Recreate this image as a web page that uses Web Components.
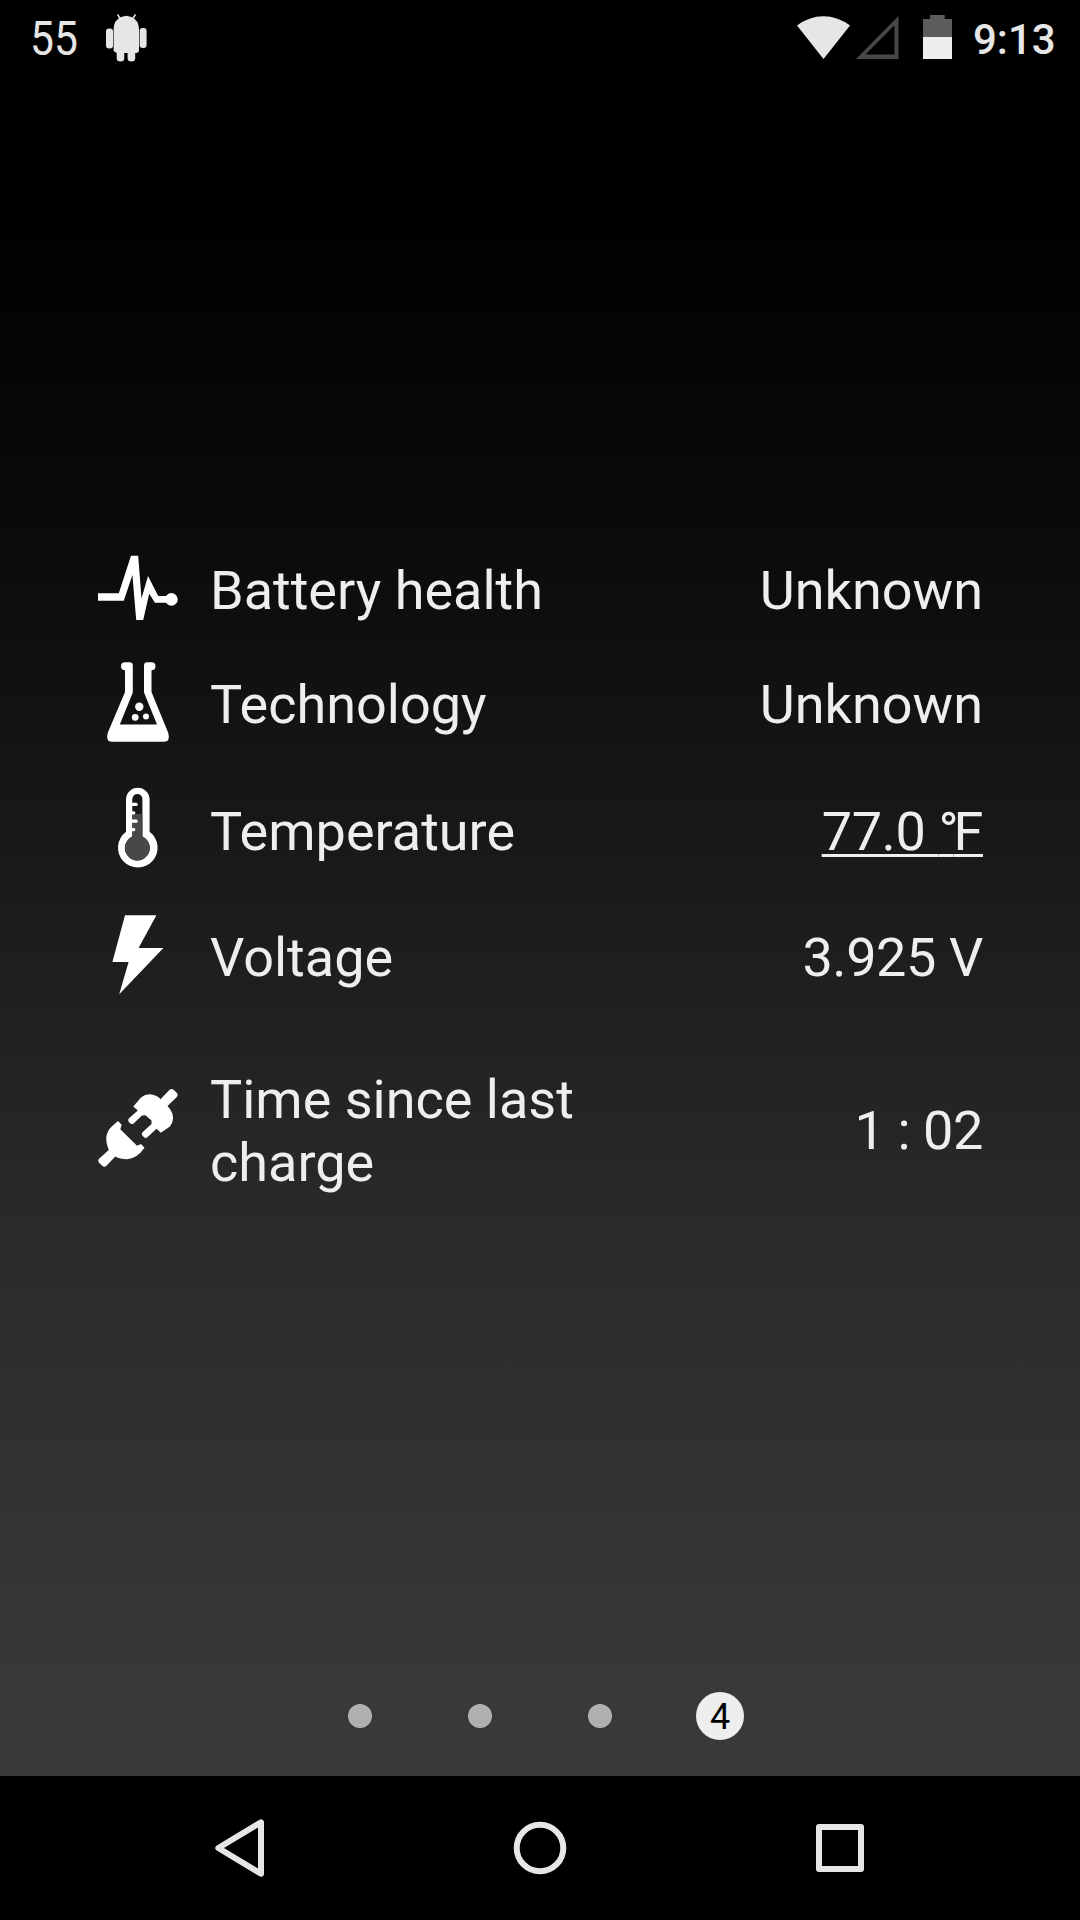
<!DOCTYPE html>
<html lang="en">
<head>
<meta charset="utf-8">
<title>Battery</title>
<style>
    body{
        margin: 0;
        background: #000;
        color: #eee;
        font-family: Roboto, sans-serif;
    }
</style>
</head>
<body>
<battery-app></battery-app>

<script>
const icons = {
    health: `<svg viewBox="18 8 80 80" fill="#fff">
        <path d="M18 53.2H38.8L51 15.8H58.2L61.5 58.5L68 36L78.2 56H87V62.8H75L69.2 53.8L63.2 80H56.2L52.4 35L43.8 60.8H18Z"/>
        <circle cx="91.4" cy="59.4" r="6.3"/>
    </svg>`,
    flask: `<svg viewBox="18 12 80 80" fill="#fff">
        <path fill-rule="evenodd" d="M45 12.2H49.5Q52.8 12.2 52.8 15.5V42.5L39.8 74.6H77L64 42.5V15.5Q64 12.2 67.3 12.2H71.5A4 4 0 0 1 71.5 20.2V42L88.3 83Q90.5 91.7 84 91.7H32Q25.5 91.7 27.7 83L45 42V20.2A4 4 0 0 1 45 12.2Z"/>
        <circle cx="59.3" cy="56.7" r="4.2"/>
        <circle cx="55.2" cy="67.3" r="3.4"/>
        <circle cx="66" cy="66.5" r="3"/>
    </svg>`,
    thermometer: `<svg viewBox="18 14 80 80" fill="#fff">
        <path fill-rule="evenodd" d="M46 24.5A11.8 11.8 0 0 1 69.6 24.5V56.8A19.8 19.8 0 1 1 46 56.8ZM52.3 24V61.5A12.5 12.5 0 1 0 62.4 61.5V24A5 5 0 0 0 52.3 24Z"/>
        <path fill="#484848" d="M52.3 39H62.4V61.5A12.5 12.5 0 1 1 52.3 61.5Z"/>
        <path d="M51 29.4H56.2M51 37.8H53.8M51 46.2H56.2M51 54.6H53.8" stroke="#fff" stroke-width="3.2" stroke-linecap="round"/>
    </svg>`,
    bolt: `<svg viewBox="18 15 80 80" fill="#fff">
        <path d="M45 15.2H76.4L58.6 48H83.4L39.2 94.2L48.6 62H32.4Z"/>
    </svg>`,
    plug: `<svg viewBox="18 19 80 80" fill="#fff">
        <path d="M53.3 36.5L61 27.5Q69.5 21 79.5 28L80.5 29.2L89.3 20Q91.5 18 93.8 20L96.7 22.8Q98.6 25 96.6 27.2L87.5 36Q95.2 44 92.3 52.3L90 56.5L80.8 62.8L76.5 58.8L67.4 67.2Q65.5 68.7 63.8 67L62.5 65.7Q61 64 62.5 62.2L71.5 54V50.5L65.5 45.3L62 45.5L53.6 53.4Q51.5 54.7 50 53.2L48.5 51.5Q47.5 49.8 49 48.2L57.8 40.5Z"/>
        <path d="M38 51L41.7 54.7L40.3 59.3L57 75.7L61 74L64.5 77.7Q57 88.5 47 89.3Q40 89.3 35.3 86.5L26.5 95.8Q24.3 97.8 22.2 95.8L19.2 93Q17.2 90.8 19.3 88.6L28.8 80Q22.5 65 32 56.3Z"/>
    </svg>`,
    android: `<svg width="42" height="48" viewBox="105 14 42 48" fill="#e6e6e6">
        <path d="M113.6 29Q114 20 121 17L126.3 15.8L131.5 17Q138.5 20 139 29V50Q139 53 136 53H135.2V58.5A3.8 3 0 0 1 127.6 58.5V53H124.3V58.5A3.8 3 0 0 1 116.7 58.5V53L113.6 51Z"/>
        <rect x="106" y="28.5" width="7" height="20" rx="3"/>
        <rect x="139.6" y="28" width="7" height="20" rx="3"/>
        <path d="M117.5 14.5L120.5 19M135.5 14.5L132.5 19" stroke="#e6e6e6" stroke-width="1.5"/>
    </svg>`,
    wifi: `<svg width="53" height="43" viewBox="797 16 53 43">
        <path fill="#e6e6e6" d="M823.5 59L797 25.5A43 43 0 0 1 850 25.5Z"/>
    </svg>`,
    signal: `<svg width="43" height="43" viewBox="855.5 16 43 43">
        <path fill="#484848" fill-rule="evenodd" d="M855.5 59H898V16ZM865 54.5H894V25.3Z"/>
    </svg>`,
    battery: `<svg width="29" height="44" viewBox="923 15 29 44">
        <path fill="#5c5c5c" d="M923 19H930V15H944.7V19H952V37H923Z"/>
        <path fill="#eee" d="M923 37H952V59H923Z"/>
    </svg>`
}

class StatusBar extends HTMLElement{
    constructor(){
        super()
        this.attachShadow({mode:"open"})
    }

    connectedCallback(){
        this.shadowRoot.innerHTML = `
        <style>
            :host{
                display: flex;
                justify-content: space-between;
                height: 74px;
                color: #e6e6e6;
            }
            .left,
            .right{
                display: flex;
                align-items: center;
            }
            .left{
                padding-left: 30px;
            }
            .left svg{
                margin-top: 2px;
            }
            .right{
                width: 283px;
            }
            svg{
                display: block;
                flex: none;
            }
            .level{
                width: 75px;
                padding-top: 2px;
                font-size: 49px;
                transform: scaleX(.87);
                transform-origin: left;
            }
            .signal{
                margin-left: 5.5px;
                margin-right: 24.5px;
            }
            .clock{
                margin-left: 21px;
                padding-top: 5px;
                font-size: 42px;
                font-weight: 500;
            }
        </style>

        <div class="left">
            <span class="level">${this.getAttribute("level")}</span>
            ${icons.android}
        </div>
        <div class="right">
            <span class="wifi">${icons.wifi}</span>
            <span class="signal">${icons.signal}</span>
            ${icons.battery}
            <span class="clock">${this.getAttribute("time")}</span>
        </div>
        `
    }
}
customElements.define('status-bar',StatusBar)

class InfoRow extends HTMLElement{
    constructor(){
        super()
        this.attachShadow({mode:"open"})
    }

    connectedCallback(){
        this.shadowRoot.innerHTML = `
        <style>
            :host{
                display: flex;
                align-items: center;
                font-size: 54px;
                line-height: 63px;
            }
            .icon{
                width: 80px;
                height: 80px;
                margin-right: 32px;
            }
            .icon svg{
                display: block;
                width: 100%;
                height: 100%;
                overflow: visible;
            }
            .label{
                width: 400px;
                padding-top: 5px;
            }
            .value{
                flex: 1;
                padding-top: 5px;
                text-align: right;
                white-space: nowrap;
            }
            :host([numeric]) .value{
                letter-spacing: -.4px;
            }
            :host([tall]) .value{
                padding-top: 3px;
            }
            :host([link]) .value{
                text-decoration: underline;
                text-decoration-thickness: 3px;
                text-underline-offset: 4px;
                text-decoration-skip-ink: none;
            }
            ::slotted(.degree){
                letter-spacing: -5px;
            }
        </style>

        <div class="icon">${icons[this.getAttribute("icon")]}</div>
        <div class="label">${this.getAttribute("label")}</div>
        <div class="value"><slot></slot></div>
        `
    }
}
customElements.define('info-row',InfoRow)

class PageDots extends HTMLElement{
    constructor(){
        super()
        this.attachShadow({mode:"open"})
    }

    connectedCallback(){
        const count = Number(this.getAttribute("count"))
        const current = Number(this.getAttribute("current"))
        let dots = ""
        for(let i = 1; i <= count; i++){
            dots += i === current ? `<div><b>${i}</b></div>` : `<div><i></i></div>`
        }
        this.shadowRoot.innerHTML = `
        <style>
            :host{
                display: flex;
                justify-content: center;
                height: 48px;
            }
            div{
                display: flex;
                align-items: center;
                justify-content: center;
                width: 120px;
            }
            i{
                width: 24px;
                height: 24px;
                border-radius: 50%;
                background: #b0b0b0;
            }
            b{
                box-sizing: border-box;
                width: 48px;
                height: 48px;
                padding-top: 1px;
                border-radius: 50%;
                background: #eee;
                color: #000;
                font-size: 36px;
                font-weight: 400;
                line-height: 48px;
                text-align: center;
            }
        </style>
        ${dots}
        `
    }
}
customElements.define('page-dots',PageDots)

class NavBar extends HTMLElement{
    constructor(){
        super()
        this.attachShadow({mode:"open"})
    }

    connectedCallback(){
        this.shadowRoot.innerHTML = `
        <style>
            :host{
                display: flex;
                align-items: center;
                justify-content: center;
                gap: 220px;
                height: 144px;
                background: #000;
            }
            svg{
                width: 80px;
                height: 80px;
                fill: none;
                stroke: #e6e6e6;
                stroke-width: 6;
                stroke-linejoin: round;
            }
        </style>
        <svg viewBox="200 1808 80 80"><path d="M261 1822.3V1873.7L218.3 1848Z"/></svg>
        <svg viewBox="500 1808 80 80"><circle cx="540" cy="1848" r="23.3"/></svg>
        <svg viewBox="800 1808 80 80"><rect x="819" y="1827" width="42" height="42"/></svg>
        `
    }
}
customElements.define('nav-bar',NavBar)

class BatteryApp extends HTMLElement{
    constructor(){
        super()
        this.attachShadow({mode:"open"})
    }

    connectedCallback(){
        this.shadowRoot.innerHTML = `
        <style>
            :host{
                display: flex;
                flex-direction: column;
                width: 1080px;
                height: 1920px;
                overflow: hidden;
            }
            main{
                display: flex;
                flex-direction: column;
                flex: 1;
                background: linear-gradient(#000 200px, #0b0b0b 540px, #1b1b1b 900px, #292929 1200px, #383838 1670px, #393939);
            }
            section{
                flex: 1;
                padding: 474px 97px 0 98px;
            }
            info-row{
                margin-bottom: 47px;
            }
            info-row:first-child{
                margin-bottom: 34px;
            }
            info-row:nth-child(3){
                margin-bottom: 46px;
            }
            info-row:nth-child(4){
                margin-bottom: 68px;
            }
            page-dots{
                margin-bottom: 36px;
            }
        </style>

        <main>
            <status-bar level="55" time="9:13"></status-bar>
            <section>
                <info-row icon="health" label="Battery health">Unknown</info-row>
                <info-row icon="flask" label="Technology">Unknown</info-row>
                <info-row icon="thermometer" label="Temperature" numeric link>77.0 <span class="degree">°</span>F</info-row>
                <info-row icon="bolt" label="Voltage" numeric>3.925 V</info-row>
                <info-row icon="plug" label="Time since last charge" numeric tall>1 : 02</info-row>
            </section>
            <page-dots count="4" current="4"></page-dots>
        </main>
        <nav-bar></nav-bar>
        `
    }
}
customElements.define('battery-app',BatteryApp)
</script>
</body>
</html>
